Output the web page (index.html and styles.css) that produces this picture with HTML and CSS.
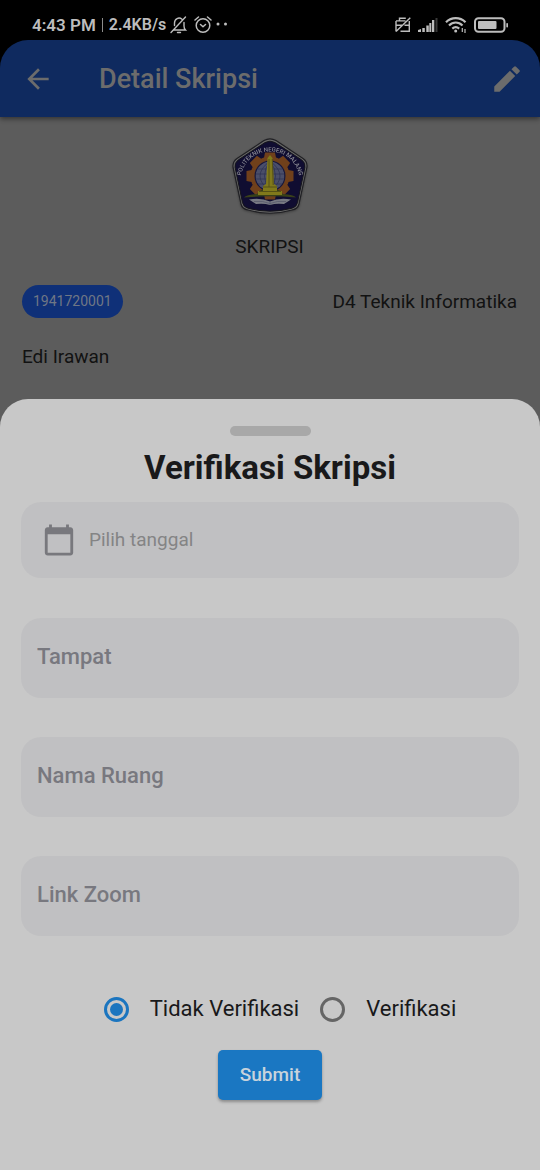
FILE: index.html
```html
<!DOCTYPE html>
<html lang="id">
<head>
<meta charset="utf-8">
<meta name="viewport" content="width=device-width, initial-scale=1">
<title>Detail Skripsi</title>
<link rel="stylesheet" href="styles.css">
</head>
<body>
<div class="status">
  <div class="status-left">
    <span>4:43 PM</span><span class="divider"></span><span class="speed">2.4KB/s</span>
    <svg class="bell" width="18" height="18" viewBox="0 0 18 18" fill="none" stroke="currentColor" stroke-width="1.4" stroke-linecap="round"><path d="M12 3.200C9 .8 4.500 2.500 4.500 7v2.500M4 14h11.500c-1-1-1.500-2-1.500-4V6.500M1 16.500 15.500 1M7.500 16.500h3"/></svg>
    <svg class="alarm" width="18" height="18" viewBox="0 0 18 18" fill="none" stroke="currentColor" stroke-width="1.5" stroke-linecap="round" stroke-linejoin="round"><circle cx="9" cy="9.500" r="6.800"/><path d="M1 4l3.500-3M17 4l-3.500-3M6.500 8.500 9 10.800l2.500-2.300"/></svg>
    <svg class="dots" width="12" height="18" viewBox="0 0 12 18" fill="currentColor"><circle cx="2" cy="8" r="1.500"/><circle cx="9.500" cy="8" r="1.500"/></svg>
  </div>
  <div class="status-right">
    <svg width="16" height="16" viewBox="0 0 16 16" fill="none" stroke="currentColor" stroke-width="1.400"><path d="M4.500 3.800V1.200h6.300M1 3.900h9.500M1 3.900v10.500M1 8.300h6M1 14.400 15.300.8M5.500 14.300h8.800V4M9.500 8.300h4.800"/></svg>
    <svg width="20" height="16" viewBox="0 0 20 16" fill="currentColor"><path d="M0 13l3-1v3H0zM4.300 11h2.500v4H4.300zM8.300 8.500h2.500V15H8.300zM11.300 6h2v9h-2zM14 3h2.300v12H14z"/><path d="M17.500 1h2v14h-2z" opacity=".3"/></svg>
    <svg width="22" height="18" viewBox="0 0 22 18" fill="none" stroke="currentColor" stroke-width="2.200"><path d="M1 6.200c5.500-5.400 14-5.400 19.500 0M4 9.500c4-4 9.500-4 13.500 0M7.300 12.600c2.200-2 4.700-2 6.900 0"/><circle cx="10.700" cy="15" r="1.500" fill="currentColor" stroke="none"/><path d="M17.300 12v4M20 13v4" stroke-width="1.200"/></svg>
    <svg width="35" height="16" viewBox="0 0 35 16"><rect x="1" y="1.200" width="29.500" height="13.600" rx="3.500" fill="none" stroke="currentColor" stroke-width="2"/><rect x="4" y="4" width="18.500" height="8" rx="1" fill="currentColor"/><rect x="32.300" y="6" width="1.700" height="4.500" rx=".8" fill="currentColor"/></svg>
  </div>
</div>
<div class="bar-backing">
  <header class="bar">
    <button class="icon-button" type="button" aria-label="Kembali">
      <svg width="32" height="32" viewBox="0 0 24 24" fill="currentColor"><path d="M20 11H7.830l5.590-5.590L12 4l-8 8 8 8 1.410-1.410L7.830 13H20v-2z"/></svg>
    </button>
    <h1 class="bar-title">Detail Skripsi</h1>
    <button class="icon-button" type="button" aria-label="Ubah">
      <svg width="34" height="34" viewBox="0 0 24 24" fill="currentColor"><path d="M3 17.250V21h3.750L17.810 9.940l-3.750-3.750L3 17.250zM20.710 7.040a1 1 0 0 0 0-1.410l-2.340-2.340a1 1 0 0 0-1.410 0l-1.830 1.830 3.750 3.750 1.830-1.830z"/></svg>
    </button>
  </header>
</div>
<main class="detail">
  <svg class="logo" width="76" height="77" viewBox="0 0 76 77" role="img" aria-label="Politeknik Negeri Malang">
    <defs>
      <path id="arc" d="M9 37.500A29.500 29.500 0 0 1 67 37.500"/>
      <clipPath id="globe"><circle cx="38" cy="38" r="14.500"/></clipPath>
    </defs>
    <path d="M32 2.600Q38-.8 44 2.600L71 20.500Q76 24 74.800 30L67 66Q65.800 71 60 72Q38 78.500 16 72Q10.200 71 9 66L1.200 30Q0 24 5 20.500Z" fill="#686868" stroke="#202024" stroke-width="1.200"/>
    <path d="M33 4.600Q38 1.800 43 4.600L69.800 22Q73.800 25 72.900 29.500L65.500 64.500Q64.600 69 60 70.200Q38 76.200 16 70.200Q11.400 69 10.500 64.500L3.100 29.500Q2.200 25 6.200 22Z" fill="#100d31" stroke="#15151b" stroke-width="1"/>
    <g fill="#70401b">
      <circle cx="38" cy="38" r="19.500"/>
      <path id="teeth" d="M33 14.500h10l1.500 8h-13zM33 61.500h10l1.500-8h-13zM14.500 33v10l8 1.500v-13zM61.500 33v10l-8 1.500v-13z"/>
      <use href="#teeth" transform="rotate(45 38 38)"/>
    </g>
    <circle cx="38" cy="38" r="15.500" fill="#18183d"/>
    <g clip-path="url(#globe)">
      <circle cx="38" cy="38" r="14.500" fill="#4a4e69"/>
      <path d="M23 31h30M23 36h30M23 41h30M23 46h30M38 23v30M38 23q-20 15 0 30M38 23q20 15 0 30M38 23q-11 15 0 30M38 23q11 15 0 30" fill="none" stroke="#2c3052" stroke-width=".7"/>
    </g>
    <path d="M12 59.500Q14 56.500 25 56L29 52h18l4 4q11 .5 13 3.500Q38 57 12 59.500Z" fill="#394019"/>
    <path d="M35.500 20l2.500-3 2.500 3 1.500 26 3 2v5h5v4H26v-4h5v-5l3-2z" fill="#81791b"/>
    <path d="M37 21v28M40.300 21 41.200 47M31 49h14M27 53.500h22" fill="none" stroke="#504c16" stroke-width=".9"/>
    <path d="M17 61.500q12-2 21 2 9-4 21-2l-7 4.500q-8-1-14 1-6-2-14-1z" fill="#777983"/>
    <path d="M38 63v4M22 63.500q9-1 16 2M54 63.500q-9-1-16 2" stroke="#4c4e62" stroke-width=".6" fill="none"/>
    <text class="logo-text"><textPath href="#arc" startOffset="50%" text-anchor="middle">POLITEKNIK NEGERI MALANG</textPath></text>
  </svg>
  <p class="kind">SKRIPSI</p>
  <div class="row"><span class="chip">1941720001</span><span>D4 Teknik Informatika</span></div>
  <p class="name">Edi Irawan</p>
</main>
<section class="sheet" role="dialog" aria-labelledby="sheet-title">
  <div class="handle"></div>
  <h2 class="sheet-title" id="sheet-title">Verifikasi Skripsi</h2>
  <form class="form">
    <label class="field date">
      <svg width="34" height="34" viewBox="0 0 24 24" fill="currentColor" aria-hidden="true"><path d="M20 3h-1V1h-2v2H7V1H5v2H4c-1.100 0-2 .9-2 2v16c0 1.100.9 2 2 2h16c1.100 0 2-.9 2-2V5c0-1.100-.9-2-2-2zm0 18H4V8h16v13z"/></svg>
      <input class="date-input" type="text" placeholder="Pilih tanggal" aria-label="Pilih tanggal" readonly>
    </label>
    <div class="texts">
      <input class="field text" type="text" placeholder="Tampat" aria-label="Tampat">
      <input class="field text" type="text" placeholder="Nama Ruang" aria-label="Nama Ruang">
      <input class="field text" type="text" placeholder="Link Zoom" aria-label="Link Zoom">
    </div>
    <div class="options" role="radiogroup" aria-label="Status verifikasi">
      <label class="option"><input class="radio" type="radio" name="status" checked>Tidak Verifikasi</label>
      <label class="option"><input class="radio" type="radio" name="status">Verifikasi</label>
    </div>
    <button class="submit" type="submit">Submit</button>
  </form>
</section>
</body>
</html>
```
FILE: styles.css
```css
* { box-sizing: border-box; }

body {
  margin: 0;
  min-height: 100vh;
  display: flex;
  flex-direction: column;
  background: #5c5c5c;
  color: #121212;
  font-family: Roboto, "Liberation Sans", sans-serif;
  font-size: 19px;
  line-height: 24px;
}

h1, h2, p { margin: 0; }
svg { display: block; flex: none; }
button, input { font: inherit; }

.status {
  display: flex;
  justify-content: space-between;
  align-items: center;
  height: 40px;
  padding: 10px 31px 0 32px;
  background: #000;
  color: #bdbdbd;
  font-size: 17px;
  font-weight: 600;
  line-height: 20px;
}
.status-left, .status-right { display: flex; align-items: center; }
.status-right { gap: 7px; }
.divider { width: 1px; height: 14px; margin: 0 6px; background: #8c8c8c; }
.speed { font-size: 16px; }
.bell { margin-left: 4px; }
.alarm { margin-left: 6px; }
.dots { margin-left: 4px; }

.bar-backing {
  background: linear-gradient(#000 50%, transparent 50%);
}
.bar {
  display: flex;
  align-items: center;
  height: 77px;
  padding: 0 16px 0 22px;
  background: #0f2a5f;
  color: #6c6c6c;
  border-radius: 28px 28px 0 0;
  box-shadow: 0 2px 5px rgba(0, 0, 0, .45);
}
.bar-title { flex: 1; padding-left: 45px; font-size: 27px; font-weight: 500; line-height: 32px; }
.icon-button {
  display: flex;
  padding: 0;
  border: 0;
  background: none;
  color: inherit;
}

.detail { display: flex; flex-direction: column; padding: 21px 23px 30px 22px; }
.logo { align-self: center; filter: drop-shadow(0 1px 1px rgba(0, 0, 0, .3)); }
.logo-text { fill: #898992; font-size: 6px; font-weight: 500; }
.kind { margin-top: 20px; text-align: center; }
.row { display: flex; justify-content: space-between; align-items: center; margin-top: 26px; }
.chip {
  padding: 6px 11px 7px;
  border-radius: 17px;
  background: #0f3078;
  color: #6f7785;
  font-size: 14px;
  line-height: 20px;
}
.name { margin-top: 27px; }

.sheet {
  flex: 1;
  display: flex;
  flex-direction: column;
  padding: 27px 21px 70px;
  border-radius: 28px 28px 0 0;
  background: #c8c8c8;
  color: #19191a;
}
.handle { align-self: center; width: 81px; height: 10px; border-radius: 5px; background: #a8a8a8; }
.sheet-title { margin-top: 12px; text-align: center; font-size: 33px; font-weight: 700; line-height: 40px; }

.form { display: flex; flex-direction: column; margin-top: 14px; }
.field {
  width: 100%;
  border: 0;
  border-radius: 20px;
  background: #c0c0c2;
  color: #78787d;
}
.date { display: flex; align-items: center; gap: 13px; height: 76px; padding: 0 21px; }
.date-input { flex: 1; min-width: 0; padding: 0; border: 0; background: none; color: inherit; }
.texts { display: flex; flex-direction: column; gap: 39px; margin-top: 40px; }
.text { height: 80px; padding: 0 16px 4px; font-size: 22px; font-weight: 500; line-height: 28px; }
.field::placeholder { color: #78787f; opacity: 1; }
.date-input::placeholder { color: #848485; opacity: 1; }

.options { display: flex; justify-content: center; gap: 21px; margin-top: 59px; padding-left: 20px; font-size: 22px; line-height: 28px; }
.option { display: flex; align-items: center; gap: 21px; }
.radio {
  appearance: none;
  display: grid;
  place-items: center;
  width: 25px;
  height: 25px;
  margin: 0;
  border: 3px solid #656565;
  border-radius: 50%;
}
.radio:checked { border-color: #1b75bf; }
.radio:checked::after { content: ""; width: 13px; height: 13px; border-radius: 50%; background: #1b75bf; }

.submit {
  align-self: center;
  margin-top: 27px;
  padding: 11px 22px;
  border: 0;
  border-radius: 5px;
  background: #1a77c2;
  color: #c8d3dc;
  font-size: 19px;
  font-weight: 500;
  line-height: 28px;
  box-shadow: 0 2px 3px rgba(0, 0, 0, .3);
}
```
